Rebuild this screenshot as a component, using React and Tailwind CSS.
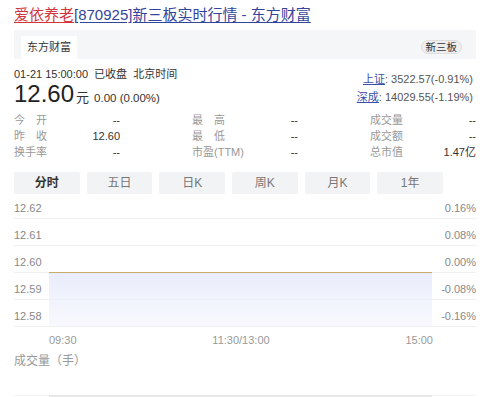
import React from "react";

const tabs = ["分时", "五日", "日K", "周K", "月K", "1年"];
const rows = [
  ["12.62", "0.16%"],
  ["12.61", "0.08%"],
  ["12.60", "0.00%"],
  ["12.59", "-0.08%"],
  ["12.58", "-0.16%"],
];

function Label({ chars }) {
  if (chars.length === 2) {
    return (
      <span className="flex w-[33px] justify-between">
        <span>{chars[0]}</span>
        <span>{chars[1]}</span>
      </span>
    );
  }
  return <span>{chars}</span>;
}

function Cell({ label, value }) {
  return (
    <div className="flex items-center justify-between">
      <span className="text-[#999]">
        <Label chars={label} />
      </span>
      <span className="text-[#333]">{value}</span>
    </div>
  );
}

export default function App() {
  return (
    <div className="w-[500px] h-[397px] overflow-hidden bg-white font-['Liberation_Sans','Noto_Sans_CJK_SC',sans-serif] text-[#333]">
      <div className="ml-[14px] w-[462px]">
        {/* title */}
        <div className="pt-[6px] text-[15px] leading-[18px] whitespace-nowrap">
          <span className="text-[#d2353d] underline underline-offset-2">爱依养老</span>
          <span className="text-[#33449b] underline underline-offset-2">[870925]新三板实时行情 - 东方财富</span>
        </div>

        {/* header bar */}
        <div className="mt-[6px] flex h-[29px] justify-between bg-[#f5f6f7]">
          <div className="ml-[7px] mt-[6px] flex h-[23px] w-[56px] items-center justify-center bg-white text-[11px] text-[#333]">
            东方财富
          </div>
          <div className="mr-[14px] mt-[10px] flex h-[14px] items-center rounded-full border border-[#dedede] bg-[#eeeeee] px-[4px] text-[10.5px] leading-none text-[#333]">
            新三板
          </div>
        </div>

        {/* quote */}
        <div className="mt-[8px] flex justify-between">
          <div>
            <div className="text-[11px] leading-[14px] text-[#333]">01-21 15:00:00&nbsp; 已收盘&nbsp; 北京时间</div>
            <div className="mt-[1px] flex items-baseline whitespace-nowrap leading-[24px]">
              <span className="text-[24px] text-[#222]">12.60</span>
              <span className="ml-[2px] text-[13px] text-[#333]">元</span>
              <span className="ml-[5px] text-[11.5px] text-[#333]">0.00 (0.00%)</span>
            </div>
          </div>
          <div className="mr-[3px] pt-[3px] text-right text-[11px] leading-[18px] text-[#555]">
            <div>
              <span className="text-[#3b4fa8] underline">上证</span>: 3522.57(-0.91%)
            </div>
            <div>
              <span className="text-[#3b4fa8] underline">深成</span>: 14029.55(-1.19%)
            </div>
          </div>
        </div>

        {/* data grid */}
        <div className="mt-[2px] grid grid-cols-[106px_106px_106px] gap-x-[72px] text-[11px] leading-[16px]">
          <Cell label="今开" value="--" />
          <Cell label="最高" value="--" />
          <Cell label="成交量" value="--" />
          <Cell label="昨收" value="12.60" />
          <Cell label="最低" value="--" />
          <Cell label="成交额" value="--" />
          <Cell label="换手率" value="--" />
          <Cell label="市盈(TTM)" value="--" />
          <Cell label="总市值" value="1.47亿" />
        </div>

        {/* tabs */}
        <div className="mt-[12px] grid w-[429px] grid-cols-6 gap-x-[7px]">
          {tabs.map((t, i) => (
            <div
              key={t}
              className={
                i === 0
                  ? "flex h-[22px] items-center justify-center rounded-[2px] bg-[#f2f3f5] text-[12px] font-bold text-[#333]"
                  : "flex h-[22px] items-center justify-center rounded-[2px] bg-[#f2f3f5] text-[12px] text-[#777]"
              }
            >
              {t}
            </div>
          ))}
        </div>

        {/* chart */}
        <div className="relative">
          {rows.map(([l, r], i) => (
            <div
              key={l}
              className={
                (i === 0 ? "h-[25px] " : "h-[27px] ") +
                "flex items-end justify-between border-b border-[#f0f0f0] pb-[3px] text-[11px] leading-[13px] text-[#888]"
              }
            >
              <span>{l}</span>
              <span>{r}</span>
            </div>
          ))}
          <div className="absolute left-[35px] top-[79px] h-[53px] w-[383px] bg-gradient-to-b from-[rgba(226,230,250,0.75)] to-[rgba(240,242,253,0.45)]" />
          <div className="absolute left-[35px] top-[78px] h-[1px] w-[383px] bg-[#c9ad6a]" />
        </div>

        {/* x axis */}
        <div className="mt-[6px] flex justify-between pl-[35px] pr-[43px] text-[11px] leading-[14px] text-[#999]">
          <span>09:30</span>
          <span>11:30/13:00</span>
          <span>15:00</span>
        </div>

        <div className="mt-[7px] text-[12px] leading-[14px] text-[#999]">成交量（手）</div>

        <div className="mt-[27px] h-[1px] bg-[#f3f3f3]">
          <div className="ml-[35px] h-[2px] w-[383px] bg-[#e8e8e8]" />
        </div>
      </div>
    </div>
  );
}
